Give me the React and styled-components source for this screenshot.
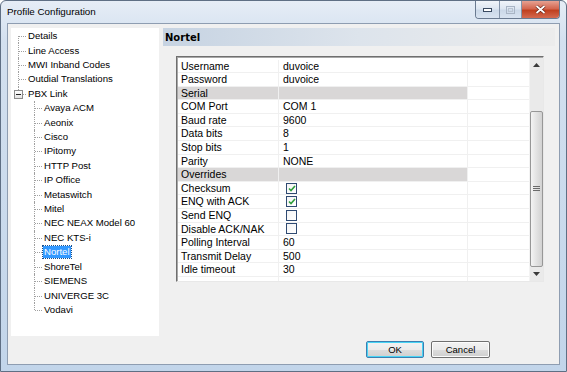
import React from 'react';
import styled, { createGlobalStyle } from 'styled-components';

const GlobalStyle = createGlobalStyle`
   html, body {
      margin: 0;
      padding: 0;
      background: #ffffff;
   }
   body {
      font-family: "Liberation Sans", Arial, sans-serif;
   }
`;

const tree = [
   { label: 'Details' },
   { label: 'Line Access' },
   { label: 'MWI Inband Codes' },
   { label: 'Outdial Translations' },
   {
      label: 'PBX Link',
      children: [
         'Avaya ACM',
         'Aeonix',
         'Cisco',
         'IPitomy',
         'HTTP Post',
         'IP Office',
         'Metaswitch',
         'Mitel',
         'NEC NEAX Model 60',
         'NEC KTS-i',
         'Nortel',
         'ShoreTel',
         'SIEMENS',
         'UNIVERGE 3C',
         'Vodavi',
      ],
   },
];

const props = [
   { k: 'Username', v: 'duvoice' },
   { k: 'Password', v: 'duvoice' },
   { cat: 'Serial' },
   { k: 'COM Port', v: 'COM 1' },
   { k: 'Baud rate', v: '9600' },
   { k: 'Data bits', v: '8' },
   { k: 'Stop bits', v: '1' },
   { k: 'Parity', v: 'NONE' },
   { cat: 'Overrides' },
   { k: 'Checksum', check: true },
   { k: 'ENQ with ACK', check: true },
   { k: 'Send ENQ', check: false },
   { k: 'Disable ACK/NAK', check: false },
   { k: 'Polling Interval', v: '60' },
   { k: 'Transmit Delay', v: '500' },
   { k: 'Idle timeout', v: '30' },
];

const Window = styled.div`
   width: 567px;
   height: 372px;
   box-sizing: border-box;
   border: 1px solid #5f6f84;
   border-radius: 6px 6px 0 0;
   background: linear-gradient(#e6edf6, #d3e0ef 40px, #c2d5ea);
   display: flex;
   flex-direction: column;
   overflow: hidden;
`;

const TitleBar = styled.div`
   height: 22px;
   display: flex;
   align-items: flex-start;
   justify-content: space-between;
   padding-left: 6px;
`;

const Title = styled.span`
   font-size: 9.8px;
   line-height: 22px;
   color: #000;
`;

const Caption = styled.div`
   display: flex;
   margin-right: 6px;
   border: 1px solid #6a7a90;
   border-top: none;
   border-radius: 0 0 4px 4px;
   overflow: hidden;
   height: 17px;
`;

const CapBtn = styled.div`
   width: ${(p) => p.w}px;
   display: flex;
   align-items: center;
   justify-content: center;
   background: ${(p) =>
      p.close
         ? 'linear-gradient(#e6a192, #d3664f 45%, #c0401f 55%, #d46a50)'
         : 'linear-gradient(#f0f4f9, #dde6f1 45%, #cbd8e8 55%, #d8e3f0)'};
   border-left: ${(p) => (p.first ? 'none' : '1px solid #8494aa')};
`;

const Client = styled.div`
   flex: 1;
   margin: 0 6px 6px 6px;
   border: 1px solid #8e9db1;
   background: #f0f0f0;
   padding: 4px 4px 0 3px;
   display: flex;
   flex-direction: column;
`;

const Main = styled.div`
   display: flex;
   gap: 4px;
   height: 308px;
`;

const TreePanel = styled.div`
   width: 148px;
   background: #ffffff;
   padding-top: 1px;
   box-sizing: border-box;
`;

const TreeRow = styled.div`
   height: 14.42px;
   display: flex;
   align-items: center;
`;

const Guide = styled.div`
   width: 16px;
   height: 100%;
   position: relative;
   flex-shrink: 0;

   &::before {
      content: '';
      position: absolute;
      left: 7px;
      top: ${(p) => (p.first ? '50%' : '0')};
      bottom: ${(p) => (p.last ? '50%' : '0')};
      border-left: ${(p) => (p.line ? '1px dotted #a0a0a0' : 'none')};
   }

   &::after {
      content: '';
      position: absolute;
      left: 8px;
      width: 7px;
      top: 50%;
      border-top: ${(p) => (p.line ? '1px dotted #a0a0a0' : 'none')};
   }
`;

const Expander = styled.div`
   position: absolute;
   left: 3px;
   top: 50%;
   margin-top: -4px;
   width: 7px;
   height: 7px;
   border: 1px solid #8c8c8c;
   background: linear-gradient(#ffffff, #e4e4e4);
   z-index: 1;

   &::after {
      content: '';
      position: absolute;
      left: 1px;
      right: 1px;
      top: 3px;
      border-top: 1px solid #222;
   }
`;

const TreeLabel = styled.span`
   font-size: 9.6px;
   line-height: 12px;
   padding: 0 1px;
   white-space: nowrap;
   color: ${(p) => (p.selected ? '#ffffff' : '#000000')};
   background: ${(p) => (p.selected ? '#3399ff' : 'transparent')};
   outline: ${(p) => (p.selected ? '1px dotted #1a4f8a' : 'none')};
`;

const RightPanel = styled.div`
   flex: 1;
   display: flex;
   flex-direction: column;
`;

const Header = styled.div`
   height: 18px;
   background: linear-gradient(to right, #c6d3e2, #dde4ec 50%, #ececec);
   display: flex;
   align-items: center;
   padding-left: 2px;
   font-family: "DejaVu Sans", "Liberation Sans", sans-serif;
   font-weight: bold;
   font-size: 10px;
   color: #000;
`;

const GridBox = styled.div`
   margin: 10px 0 0 13px;
   width: 368px;
   height: 226px;
   box-sizing: border-box;
   border-style: solid;
   border-width: 1px;
   border-color: #6f6f6f #e8e8e8 #e8e8e8 #6f6f6f;
   box-shadow: inset 1px 1px 0 #a8a8a8;
   padding: 1px 0 0 1px;
   background: #ffffff;
   display: flex;
`;

const Table = styled.div`
   flex: 1;
   display: flex;
   flex-direction: column;
   padding-top: 1.5px;
`;

const PropRow = styled.div`
   display: grid;
   grid-template-columns: 101px 189px 1fr;
   height: 13.6px;
   box-sizing: border-box;
   border-bottom: 1px solid #f0f0f0;
   font-size: 10.5px;
   line-height: 12.6px;
   color: #000;
`;

const Filler = styled(PropRow)`
   flex: 1;
   border-bottom: none;
`;

const Cell = styled.div`
   border-right: ${(p) => (p.end ? 'none' : '1px solid #f0f0f0')};
   background: ${(p) => (p.cat ? '#d9d7d7' : 'transparent')};
   padding-left: ${(p) => p.pad || 0}px;
   display: flex;
   align-items: center;
   white-space: nowrap;
`;

const CheckBox = styled.div`
   width: 9px;
   height: 9px;
   margin-left: 3px;
   border: 1px solid #2f4a72;
   background: linear-gradient(135deg, #f4f4f4, #ffffff);
   display: flex;
   align-items: center;
   justify-content: center;
`;

const ScrollBar = styled.div`
   width: 13px;
   background: #eaeaea;
   display: flex;
   flex-direction: column;
   border-left: 1px solid #f3f3f3;
`;

const Arrow = styled.div`
   height: 14px;
   display: flex;
   align-items: center;
   justify-content: center;
`;

const Track = styled.div`
   flex: 1;
   display: flex;
   flex-direction: column;
   padding-top: 39px;
`;

const Thumb = styled.div`
   flex: 1;
   border: 1px solid #979797;
   border-radius: 2px;
   background: linear-gradient(to right, #f4f4f4, #e4e4e4 45%, #d2d2d2);
   display: flex;
   align-items: center;
   justify-content: center;
`;

const ButtonRow = styled.div`
   display: flex;
   justify-content: flex-end;
   gap: 7px;
   margin-top: 5px;
   padding-right: 65px;
`;

const Button = styled.button`
   width: ${(p) => p.w}px;
   height: 17px;
   padding: 0;
   font-family: "Liberation Sans", Arial, sans-serif;
   font-size: 9.5px;
   color: #000;
   border: 1px solid ${(p) => (p.primary ? '#3c7fb1' : '#707070')};
   border-radius: 2px;
   background: linear-gradient(#f2f2f2, #ebebeb 50%, #dddddd 51%, #cfcfcf);
   box-shadow: ${(p) => (p.primary ? 'inset 0 0 0 1px #48d4f5' : 'inset 0 0 0 1px #fcfcfc')};
`;

const Check = () => (
   <svg width="8" height="7" viewBox="0 0 8 7">
      <path d="M1 3.5 L3 5.5 L7 1" stroke="#2e9e3b" strokeWidth="1.6" fill="none" />
   </svg>
);

const TreeView = () => {
   const rows = [];
   tree.forEach((node, i) => {
      const lastRoot = i === tree.length - 1;
      rows.push(
         <TreeRow key={node.label}>
            <Guide line first={i === 0} last={lastRoot}>
               {node.children && <Expander />}
            </Guide>
            <TreeLabel>{node.label}</TreeLabel>
         </TreeRow>
      );
      (node.children || []).forEach((child, j) => (
         rows.push(
            <TreeRow key={child}>
               <Guide />
               <Guide line last={j === node.children.length - 1} />
               <TreeLabel selected={child === 'Nortel'}>{child}</TreeLabel>
            </TreeRow>
         )
      ));
   });
   return <TreePanel>{rows}</TreePanel>;
};

const PropertyGrid = () => (
   <GridBox>
      <Table>
         {props.map((p) =>
            p.cat ? (
               <PropRow key={p.cat}>
                  <Cell cat pad={3}>{p.cat}</Cell>
                  <Cell cat />
                  <Cell end />
               </PropRow>
            ) : (
               <PropRow key={p.k}>
                  <Cell pad={3}>{p.k}</Cell>
                  <Cell pad={4}>
                     {p.check !== undefined ? (
                        <CheckBox>{p.check && <Check />}</CheckBox>
                     ) : (
                        p.v
                     )}
                  </Cell>
                  <Cell end />
               </PropRow>
            )
         )}
         <Filler>
            <Cell />
            <Cell />
            <Cell end />
         </Filler>
      </Table>
      <ScrollBar>
         <Arrow>
            <svg width="7" height="4" viewBox="0 0 7 4">
               <path d="M0 4 L3.5 0 L7 4 Z" fill="#3a3a3a" />
            </svg>
         </Arrow>
         <Track>
            <Thumb>
               <svg width="7" height="6" viewBox="0 0 7 6">
                  <path d="M0 0.5 H7 M0 2.5 H7 M0 4.5 H7" stroke="#6b6b6b" strokeWidth="1" />
               </svg>
            </Thumb>
         </Track>
         <Arrow>
            <svg width="7" height="4" viewBox="0 0 7 4">
               <path d="M0 0 L7 0 L3.5 4 Z" fill="#3a3a3a" />
            </svg>
         </Arrow>
      </ScrollBar>
   </GridBox>
);

const App = () => (
   <>
      <GlobalStyle />
      <Window>
         <TitleBar>
            <Title>Profile Configuration</Title>
            <Caption>
               <CapBtn w={23} first>
                  <svg width="9" height="4" viewBox="0 0 9 4">
                     <rect x="0.5" y="0.5" width="8" height="3" fill="#fff" stroke="#394a61" />
                  </svg>
               </CapBtn>
               <CapBtn w={21}>
                  <svg width="9" height="8" viewBox="0 0 9 8">
                     <rect x="0.5" y="0.5" width="8" height="7" fill="none" stroke="#a8b4c4" />
                     <rect x="2.5" y="2.5" width="4" height="3" fill="none" stroke="#b8c3d1" />
                  </svg>
               </CapBtn>
               <CapBtn w={37} close>
                  <svg width="11" height="9" viewBox="0 0 11 9">
                     <path d="M1.5 1 L9.5 8 M9.5 1 L1.5 8" stroke="#5a1a10" strokeWidth="3" />
                     <path d="M1.5 1 L9.5 8 M9.5 1 L1.5 8" stroke="#ffffff" strokeWidth="1.8" />
                  </svg>
               </CapBtn>
            </Caption>
         </TitleBar>
         <Client>
            <Main>
               <TreeView />
               <RightPanel>
                  <Header>Nortel</Header>
                  <PropertyGrid />
               </RightPanel>
            </Main>
            <ButtonRow>
               <Button w={58} primary>OK</Button>
               <Button w={59}>Cancel</Button>
            </ButtonRow>
         </Client>
      </Window>
   </>
);

export default App;
